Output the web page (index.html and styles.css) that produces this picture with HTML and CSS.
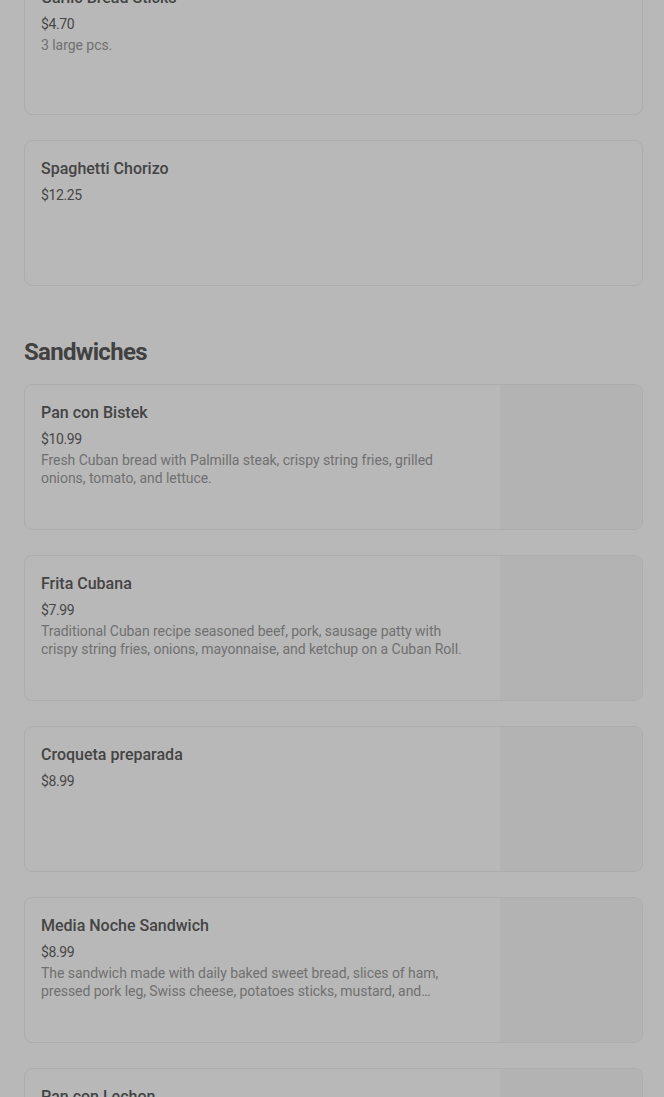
FILE: index.html
```html
<!DOCTYPE html>
<html lang="en">

<head>
    <meta charset="UTF-8">
    <title>Menu</title>
    <link rel="stylesheet" href="styles.css">
</head>

<body>
    <div class="menu">
        <section class="section">
            <div class="item">
                <div class="info">
                    <div class="name">Garlic Bread Sticks</div>
                    <div class="price">$4.70</div>
                    <div class="desc">3 large pcs.</div>
                </div>
            </div>
            <div class="item">
                <div class="info">
                    <div class="name">Spaghetti Chorizo</div>
                    <div class="price">$12.25</div>
                </div>
            </div>
        </section>

        <section class="section">
            <h2>Sandwiches</h2>
            <div class="item">
                <div class="info">
                    <div class="name">Pan con Bistek</div>
                    <div class="price">$10.99</div>
                    <div class="desc">Fresh Cuban bread with Palmilla steak, crispy string fries, grilled onions, tomato, and lettuce.</div>
                </div>
                <div class="thumb"></div>
            </div>
            <div class="item">
                <div class="info">
                    <div class="name">Frita Cubana</div>
                    <div class="price">$7.99</div>
                    <div class="desc">Traditional Cuban recipe seasoned beef, pork, sausage patty with crispy string fries, onions, mayonnaise, and ketchup on a Cuban Roll.</div>
                </div>
                <div class="thumb"></div>
            </div>
            <div class="item">
                <div class="info">
                    <div class="name">Croqueta preparada</div>
                    <div class="price">$8.99</div>
                </div>
                <div class="thumb"></div>
            </div>
            <div class="item">
                <div class="info">
                    <div class="name">Media Noche Sandwich</div>
                    <div class="price">$8.99</div>
                    <div class="desc">The sandwich made with daily baked sweet bread, slices of ham, pressed pork leg, Swiss cheese, potatoes sticks, mustard, and pickles.</div>
                </div>
                <div class="thumb"></div>
            </div>
            <div class="item">
                <div class="info">
                    <div class="name">Pan con Lechon</div>
                    <div class="price">$9.99</div>
                </div>
                <div class="thumb"></div>
            </div>
        </section>
    </div>
</body>

</html>
```

FILE: styles.css
```css
body {
    margin: 0;
    background-color: #b8b8b8;
    font-family: Roboto, "Liberation Sans", sans-serif;
    overflow: hidden;
}

/* page is scrolled a little, first card is cut at the top */
.menu {
    margin-top: -31px;
    padding: 0 21px 0 24px;
}

.section {
    display: flex;
    flex-direction: column;
    gap: 25px;
    margin-bottom: 50px;
}

.section h2 {
    margin: 0 0 -9px;
    font-size: 24px;
    line-height: 32px;
    font-weight: 700;
    letter-spacing: -0.7px;
    color: #414141;
}

.item {
    display: grid;
    grid-template-columns: 1fr 142px;
    height: 144px;
    border: 1px solid #adadad;
    border-radius: 8px;
    overflow: hidden;
    background-color: #b8b8b8;
}

.info {
    padding: 16px 29px 16px 16px;
}

.thumb {
    background-color: #b3b3b3;
}

.name {
    font-size: 16px;
    line-height: 24px;
    font-weight: 500;
    color: #444;
}

.price {
    margin-top: 4px;
    font-size: 14px;
    line-height: 20px;
    letter-spacing: -0.4px;
    color: #474747;
}

.desc {
    margin-top: 2px;
    font-size: 14px;
    line-height: 18px;
    color: #707070;
    letter-spacing: -0.05px;
    display: -webkit-box;
    -webkit-line-clamp: 2;
    -webkit-box-orient: vertical;
    overflow: hidden;
}
```
